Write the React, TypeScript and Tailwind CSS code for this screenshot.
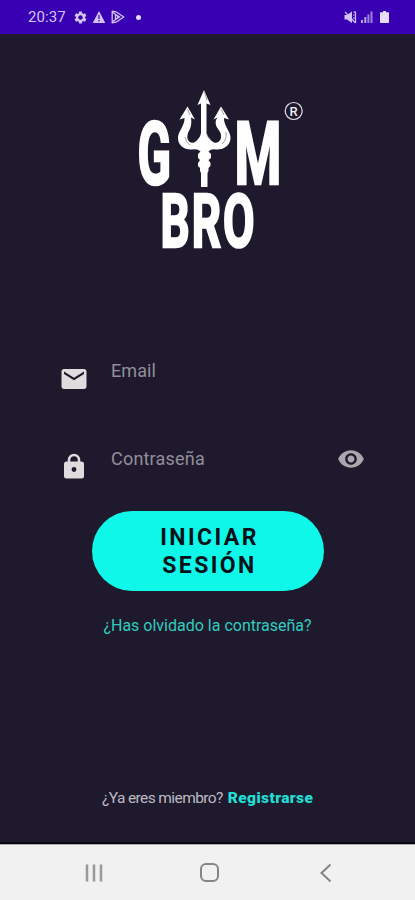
import { MdEmail, MdRemoveRedEye, MdSettings } from "react-icons/md";

function StatusBar() {
  return (
    <header className="flex h-[34px] items-center bg-[#3900b3] pl-7 pr-[26px] text-[#d3c3f3]">
      <span className="w-[45px] pt-px text-[15px] leading-none tracking-[0.1px]">20:37</span>
      <MdSettings size={15} />
      <svg width="14" height="14" viewBox="0 0 14 14" className="ml-[4px]">
        <path d="M7 1 13.300 13H.7Z" fill="currentColor" />
        <path d="M7 5v4M7 10v1.500" stroke="#3900b3" strokeWidth="1.200" />
      </svg>
      <svg width="14" height="14" viewBox="0 0 14 14" className="ml-[5px]" fill="none" stroke="currentColor" strokeWidth="1.3">
        <path d="M1.2 1.2 5 1.8 12.8 7 5 12.2 1.2 12.8Z" strokeLinejoin="round" />
        <path d="M1.5 2 7.5 7 1.5 12M4.5 4.5V9.5L8.5 7Z" />
      </svg>
      <span className="ml-[11px] size-[5px] rounded-full bg-[#e5dcfa]" />

      <svg width="13" height="13" viewBox="0 0 13 13" className="ml-auto" fill="currentColor">
        <path d="M0.5 4H3L8 0.5V12L3 8.5H0.5Z" />
        <path d="M1 0.8 11.5 12M9.5 1.2h2.5M11.5 1v11M9 4h1.5M9 7h3" fill="none" stroke="currentColor" strokeWidth="1.2" />
      </svg>
      <svg width="12" height="12" viewBox="0 0 12 12" className="ml-[4px]" fill="currentColor">
        <rect x="0" y="9" width="2" height="3" opacity=".85" />
        <rect x="3.3" y="6" width="2" height="6" opacity=".85" />
        <rect x="6.4" y="3.3" width="2" height="8.7" opacity=".65" />
        <rect x="9.5" y="0.5" width="2" height="11.5" opacity=".65" />
      </svg>
      <svg width="9" height="12" viewBox="0 0 9 12" className="ml-[7px]" fill="#e5dcfa">
        <path d="M3 0h3v1.2h2.3q.7 0 .7.7v9.400q0 .7-.7.7H.7Q0 12 0 11.300V1.900Q0 1.200.7 1.200H3Z" />
      </svg>
    </header>
  );
}

function Logo() {
  return (
    <svg
      width="172"
      height="174"
      viewBox="134 88 172 174"
      className="ml-[134px] mt-[54px] block shrink-0 overflow-visible"
      fill="#fff"
      fontFamily="Roboto, sans-serif"
      fontWeight="700"
    >
      <g stroke="#fff" strokeWidth="2.6">
        <text transform="translate(137.500 184) scale(.56 1)" fontSize="88">G</text>
        <text transform="translate(234.500 184) scale(.61 1)" fontSize="88">M</text>
        <text transform="translate(160.500 246.500) scale(.61 1)" fontSize="75" letterSpacing="3.200">BRO</text>
      </g>

      {/* Tridente */}
      <path d="M204 90 210.500 105 206.500 103.500V133Q208 139 214 142.500C219 144 222.500 139 220.500 133C218 128 214.500 126 216 120L217.500 117.500 213.500 119.500 221 106.500 229 119.500 224 118C223.500 125 230 131 230.500 137C231 145 224 150 216 149.500Q211 148.500 208.500 151.500L211 154V158L208.500 160 210.500 163V166L208.500 168V171L207.500 173V187H201V173L200 171V168L198 166V163L200 160 198 158V154L200.500 151.500Q198 148.500 192 149.500C184 150 177.500 145 178 137C178.500 131 185 125 184.500 118L179.500 119.500 187.500 106.500 195 119.500 191 117.500C192 125 190.500 128 188 133C186 139 189 144 194 142.500Q200 139 201 133V103.500L197.500 105Z" />
      <path d="M185 137q1 6 5 8M226 132q1 8-4 12M206.500 133q1 4 4 6M204.500 92l2.500 8M187.500 109l2.500 6M221 109l3 6" fill="none" stroke="#77717f" strokeWidth=".7" />

      <circle cx="293.700" cy="111" r="8.500" fill="none" stroke="#e4e2e8" strokeWidth="1.200" />
      <text x="289.600" y="115.500" fontSize="13" fontWeight="500" fill="#eceaf0">R</text>
    </svg>
  );
}

function LockIcon() {
  return (
    <svg width="30" height="30" viewBox="0 0 30 30" className="mt-[4px] text-[#dedcdd]" fill="none">
      <path d="M10 13V9a5 5 0 0 1 10 0v4" stroke="currentColor" strokeWidth="2.500" />
      <rect x="5" y="10.500" width="20" height="17" rx="2.500" fill="currentColor" />
      <circle cx="15" cy="18.500" r="2.400" fill="#1e192d" />
    </svg>
  );
}

function LoginForm() {
  return (
    <form className="mt-[97px] flex flex-col">
      <label className="flex h-[42px] pl-[59px]">
        <MdEmail size={30} className="mt-[5px] text-[#dedcdd]" />
        <span className="ml-[22px] text-[18px] leading-6 tracking-[0.1px] text-[#928e9a]">Email</span>
      </label>
      <label className="mt-[46px] flex h-[42px] pl-[59px] pr-[50px]">
        <LockIcon />
        <span className="ml-[22px] text-[18px] leading-6 tracking-[0.2px] text-[#928e9a]">Contraseña</span>
        <MdRemoveRedEye size={28} className="ml-auto -mt-[2px] text-[#aaa7ae]" />
      </label>
      <button
        type="button"
        className="ml-[92px] mt-[22px] h-[80px] w-[232px] rounded-[40px] bg-[#0ff7e8] pl-[3px] pt-px text-[23px] font-bold leading-[28px] tracking-[2.4px] text-[#08101a]"
      >
        INICIAR
        <br />
        SESIÓN
      </button>
      <a className="mt-[23px] text-center text-[16px] leading-6 text-[#30cdbf]">¿Has olvidado la contraseña?</a>
    </form>
  );
}

function NavigationBar() {
  return (
    <nav className="h-[56px] shrink-0 border-t border-[#aaa8ab] bg-[#f1f1f2] text-[#858585]">
      <svg width="415" height="55" viewBox="0 0 415 55" fill="none" stroke="currentColor" strokeWidth="2">
        <path d="M87 19.500v17M94 19.500v17M101 19.500v17" strokeWidth="2.500" stroke="#999" />
        <rect x="201" y="19" width="17" height="17" rx="5" />
        <path d="M330.500 19.500 321.500 28 330.500 36.500" />
      </svg>
    </nav>
  );
}

export default function App() {
  return (
    <div className="flex h-[900px] w-[415px] flex-col overflow-hidden bg-[#1e192d] font-['Roboto',sans-serif]">
      <StatusBar />
      <main className="flex flex-1 flex-col border-b-2 border-[#08050f]">
        <Logo />
        <LoginForm />
        <p className="mb-[32px] mt-auto flex items-center gap-[5px] pl-[102px] leading-6">
          <span className="text-[15.500px] tracking-[-0.600px] text-[#bcb9c1]">¿Ya eres miembro?</span>
          <a className="text-[15.500px] font-black tracking-[0.400px] text-[#20dfd2]">Registrarse</a>
        </p>
      </main>
      <NavigationBar />
    </div>
  );
}
